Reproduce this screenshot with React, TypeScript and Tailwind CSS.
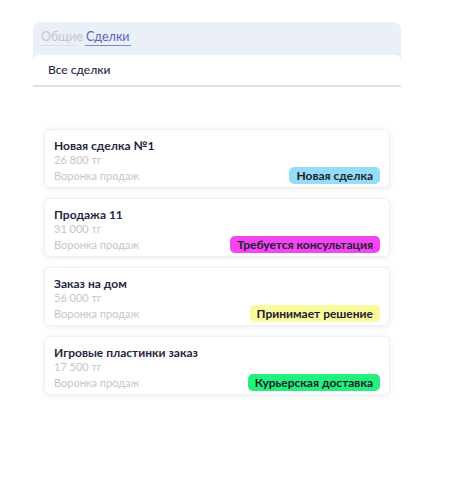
import React from "react";

const deals = [
  { title: "Новая сделка №1", price: "26 800 тг", status: "Новая сделка", color: "bg-[#93ddf7]" },
  { title: "Продажа 11", price: "31 000 тг", status: "Требуется консультация", color: "bg-[#f545f2]" },
  { title: "Заказ на дом", price: "56 000 тг", status: "Принимает решение", color: "bg-[#fafa9c]" },
  { title: "Игровые пластинки заказ", price: "17 500 тг", status: "Курьерская доставка", color: "bg-[#22ef7c]" },
];

export default function App() {
  return (
    <div className="w-[474px] h-[487px] bg-white pt-[22px] pl-[33px] font-['Lato',_'Noto_Sans',sans-serif]">
      <div className="w-[368px] rounded-t-[8px] bg-[#ebeff8]">
        <div className="h-[33px] flex items-start pt-[8px] pl-[8px] gap-[6px] text-[12.5px] leading-[13px]">
          <div className="text-[#c3c6cd] border-b-[1.5px] border-[#dcdfe6] pb-[1.5px] w-[38px]">Общие</div>
          <div className="text-[#5866b8] border-b-[1.5px] border-[#7c87d3] pb-[1.5px] px-[1px]">Сделки</div>
        </div>
        <div className="h-[32px] bg-white rounded-t-[6px] border-b-2 border-[#e2e2e4] flex items-center pl-[15px] text-[12px] font-medium text-[#1f2744]">
          Все сделки
        </div>
      </div>
      <div className="mt-[42px] ml-[11px] w-[346px] flex flex-col gap-[10px]">
        {deals.map((d) => (
          <div
            key={d.title}
            className="h-[59px] rounded-[6px] bg-white border border-[#f0f0f2] shadow-[0_1px_6px_rgba(0,0,0,0.08)] pt-[8px] pl-[9px] pr-[9px] flex flex-col"
          >
            <div className="text-[12px] leading-[15px] font-bold text-[#1f2744]">{d.title}</div>
            <div className="text-[11px] leading-[14px] text-[#c6c6c8]">{d.price}</div>
            <div className="flex items-center justify-between h-[17px]">
              <div className="text-[11px] leading-[14px] text-[#c6c6c8]">Воронка продаж</div>
              <div className={`${d.color} rounded-[5px] h-[17px] px-[7px] flex items-center text-[12px] leading-[14px] font-bold text-[#1b1d2e]`}>
                {d.status}
              </div>
            </div>
          </div>
        ))}
      </div>
    </div>
  );
}
